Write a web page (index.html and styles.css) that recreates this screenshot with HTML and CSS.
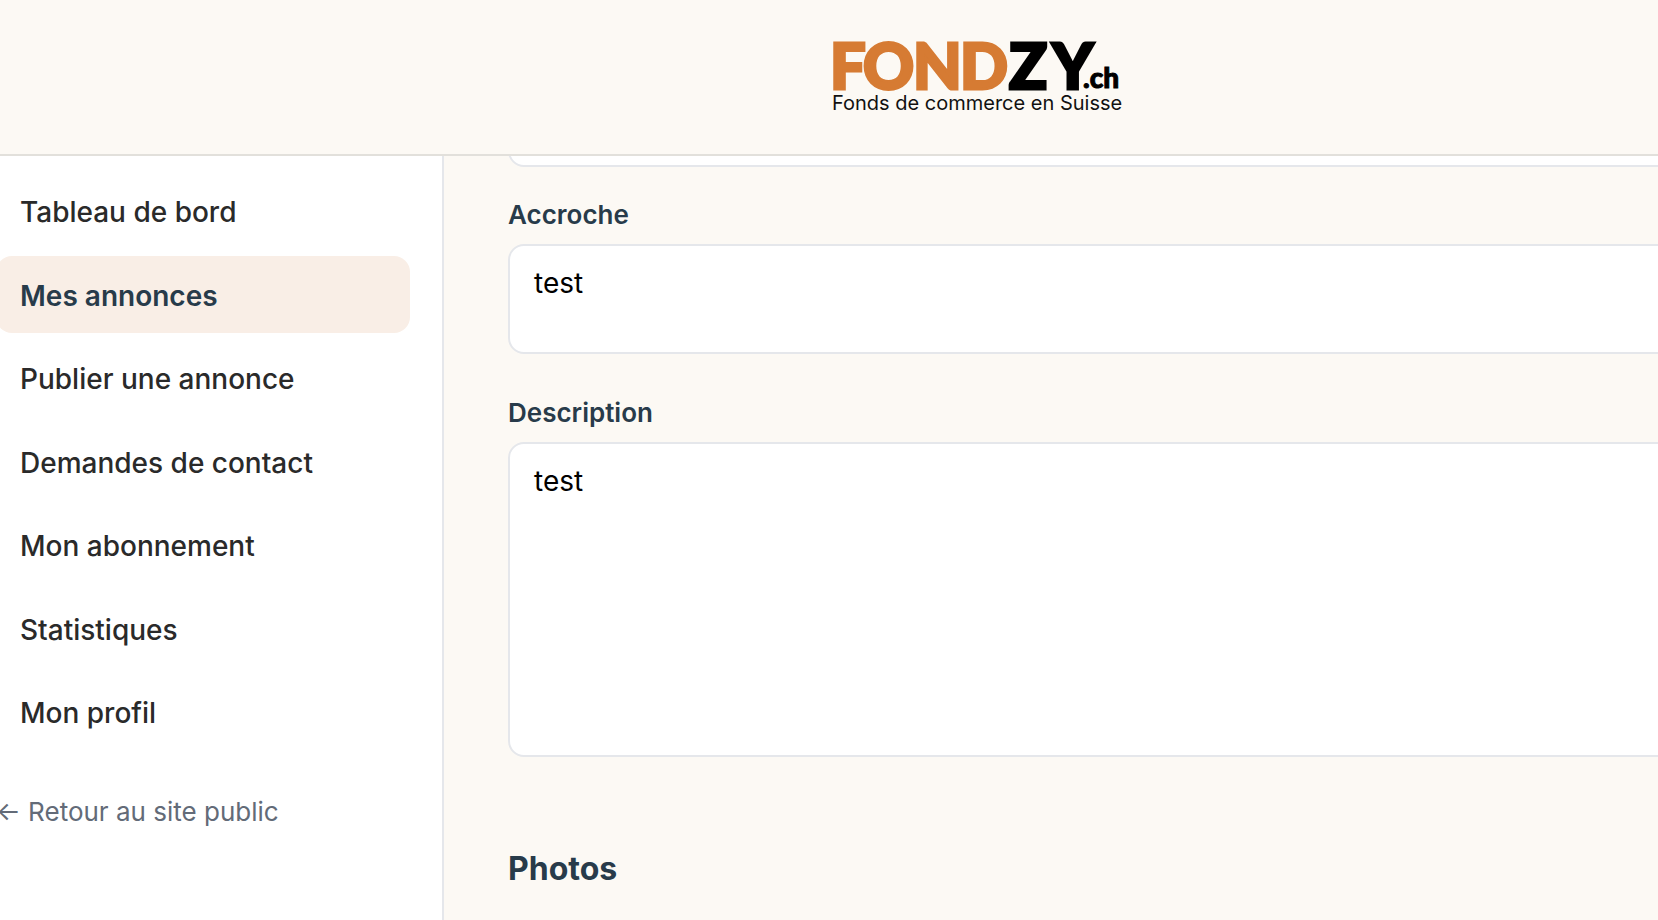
FILE: index.html
```
<!DOCTYPE html>
<html lang="fr">
<head>
  <meta charset="UTF-8">
  <meta name="viewport" content="width=device-width, initial-scale=1.0">
  <title>Fondzy.ch - Mes annonces</title>
  <link rel="stylesheet" href="styles.css">
</head>
<body>
  <div class="page">
    <header class="header">
      <a href="#accueil" class="logo">
        <svg width="292" height="76" viewBox="0 0 292 76" role="img" aria-label="Fondzy.ch">
          <text class="logo-name logo-orange" y="51"><tspan x="-1">F</tspan><tspan x="32">O</tspan><tspan x="82">N</tspan><tspan x="129">D</tspan></text>
          <text class="logo-name" y="51"><tspan x="178">Z</tspan><tspan x="221">Y</tspan></text>
          <text class="logo-ext" x="252" y="50">.ch</text>
          <text class="logo-tagline" x="1" y="72">Fonds de commerce en Suisse</text>
        </svg>
      </a>
    </header>

    <div class="layout">
      <aside class="sidebar">
        <nav class="menu">
          <a href="#tableau">Tableau de bord</a>
          <a href="#annonces" class="active">Mes annonces</a>
          <a href="#publier">Publier une annonce</a>
          <a href="#demandes">Demandes de contact</a>
          <a href="#abonnement">Mon abonnement</a>
          <a href="#statistiques">Statistiques</a>
          <a href="#profil">Mon profil</a>
        </nav>
        <a href="#site" class="back-link">← Retour au site public</a>
      </aside>

      <main class="content">
        <form>
          <input type="text" class="field field-title" aria-label="Titre">

          <label for="accroche">Accroche</label>
          <textarea id="accroche" class="field field-short">test</textarea>

          <label for="description">Description</label>
          <textarea id="description" class="field field-long">test</textarea>

          <h2>Photos</h2>
        </form>
      </main>
    </div>
  </div>
</body>
</html>
```
FILE: styles.css
```
* {
  box-sizing: border-box;
}
body {
  margin: 0;
  overflow: hidden;
  font-family: Inter, 'Liberation Sans', sans-serif;
  font-size: 28px;
  background: #fcf9f4;
  color: #2a2a2a;
}
a {
  color: inherit;
  text-decoration: none;
}

/* wider than the window, shifted slightly to the left */
.page {
  display: flex;
  flex-direction: column;
  height: 100vh;
  margin-left: -36px;
  width: calc(100% + 368px);
}

.header {
  flex: none;
  display: flex;
  justify-content: center;
  padding: 38px 0 40px;
  border-bottom: 2px solid #e2e0db;
}
.logo {
  display: block;
  height: 76px;
}
.logo svg {
  display: block;
  overflow: visible;
}
.logo-name {
  font-family: Lato, sans-serif;
  font-weight: 900;
  font-size: 63px;
  fill: #000;
  stroke: #000;
  stroke-width: 3px;
}
.logo-orange {
  fill: #d67b33;
  stroke: #d67b33;
}
.logo-ext {
  font-family: Lato, sans-serif;
  font-weight: 900;
  font-size: 28px;
  fill: #000;
  stroke: #000;
  stroke-width: 1px;
}
.logo-tagline {
  font-family: Inter, sans-serif;
  font-size: 20px;
  fill: #111;
}

.layout {
  flex: 1;
  min-height: 0;
  display: flex;
}
.sidebar {
  flex: none;
  width: 480px;
  padding: 16px 32px;
  background: #fff;
  border-right: 2px solid #e5e7eb;
}
.menu {
  display: flex;
  flex-direction: column;
  justify-content: space-between;
  height: 578px;
}
.menu a {
  padding: 19px 24px 15px;
  border-radius: 16px;
  line-height: 43px;
  font-weight: 500;
}
.menu a.active {
  background: #f9eee6;
  color: #283b4a;
  font-weight: 600;
}
.back-link {
  display: block;
  margin-top: 42px;
  line-height: 40px;
  font-size: 26px;
  color: #636b78;
}

.content {
  flex: 1;
  min-width: 0;
  padding: 0 64px;
  overflow: hidden;
}
label {
  display: block;
  margin-bottom: 10px;
  line-height: 38px;
  font-size: 26px;
  font-weight: 600;
  color: #283b4a;
}
.field {
  display: block;
  width: 100%;
  padding: 16px 24px;
  border: 2px solid #e5e7eb;
  border-radius: 16px;
  background: #fff;
  color: #000;
  font-family: inherit;
  font-size: 28px;
  line-height: 42px;
  resize: none;
}
/* scrolled up under the header */
.field-title {
  height: 78px;
  margin: -67px 0 29px;
}
.field-short {
  height: 110px;
  margin-bottom: 40px;
}
.field-long {
  height: 315px;
}
h2 {
  margin: 88px 0 0;
  line-height: 48px;
  font-size: 32px;
  font-weight: 700;
  color: #283b4a;
}
```
